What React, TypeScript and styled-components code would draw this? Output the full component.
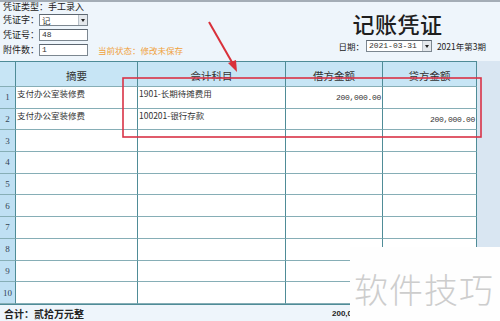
import React from "react";
import styled, { createGlobalStyle } from "styled-components";

const GlobalStyle = createGlobalStyle`
  html, body {
    margin: 0;
    padding: 0;
    background: #eef5fb;
  }
  body {
    font-family: "Noto Sans CJK SC", "Noto Sans", sans-serif;
    color: #222;
  }
`;

const Page = styled.div`
  position: relative;
  width: 500px;
  height: 321px;
  overflow: hidden;
  background: #eef5fb;
`;

const TopBar = styled.div`
  height: 2px;
  background: #a4adb6;
`;

const HeaderArea = styled.div`
  height: 59px;
  display: flex;
  justify-content: space-between;
  box-sizing: border-box;
`;

const LeftInfo = styled.div`
  display: flex;
  flex-direction: column;
  padding-left: 3px;
  gap: 3px;
`;

const TypeLine = styled.div`
  font-size: 9px;
  line-height: 9px;
  height: 9px;
`;

const FieldRow = styled.div`
  display: flex;
  align-items: center;
  height: 12px;
  font-size: 9px;
`;

const Label = styled.span`
  width: 36px;
  font-size: 9px;
  line-height: 12px;
`;

const Box = styled.div<{ $w: number }>`
  width: ${(p) => p.$w}px;
  height: 12px;
  box-sizing: border-box;
  border: 1px solid #7c8790;
  border-top-color: #5c6670;
  background: #fff;
  font-family: "Liberation Mono", monospace;
  font-size: 8px;
  line-height: 10px;
  padding-left: 2px;
  display: flex;
  justify-content: space-between;
  align-items: stretch;
  color: #333;
`;

const BoxText = styled.span`
  font-family: "Noto Sans CJK SC", "Liberation Sans", sans-serif;
  font-size: 8.5px;
  line-height: 10px;
`;

const DropBtn = styled.span`
  width: 8px;
  background: #e4e8ec;
  border-left: 1px solid #b8c0c8;
  display: flex;
  align-items: center;
  justify-content: center;
  &::after {
    content: "";
    border-left: 2.5px solid transparent;
    border-right: 2.5px solid transparent;
    border-top: 3px solid #222;
  }
`;

const Status = styled.span`
  margin-left: 10px;
  color: #f0a23c;
  font-size: 8.5px;
`;

const RightInfo = styled.div`
  display: flex;
  flex-direction: column;
  align-items: flex-start;
  padding-right: 14px;
`;

const Title = styled.div`
  margin-left: 14px;
  margin-top: 7px;
  font-size: 22px;
  line-height: 28px;
  font-weight: 500;
  letter-spacing: 0.5px;
  color: #1e1e1e;
`;

const DateRow = styled.div`
  display: flex;
  align-items: center;
  gap: 2px;
  margin-top: 3px;
  font-size: 8.5px;
`;

const Period = styled.span`
  margin-left: 3px;
  font-size: 8.5px;
`;

const Grid = styled.div`
  display: grid;
  grid-template-columns: 16px 122px 148px 97px 94px 23px;
  grid-template-rows: 25px repeat(10, 21.7px);
  border-top: 1px solid #4f8c97;
  background: #fff;
`;

const Cell = styled.div<{ $kind?: "head" | "num" | "text" | "amount" }>`
  box-sizing: border-box;
  border-right: 1px solid #4f8c97;
  border-bottom: 1px solid #86aeb6;
  background: ${(p) =>
    p.$kind === "head" ? "#c7e5f5" : p.$kind === "num" ? "#bfe0f3" : "#fff"};
  font-size: ${(p) => (p.$kind === "head" ? "10.5px" : "8.5px")};
  display: flex;
  overflow: hidden;
  white-space: nowrap;
  ${(p) =>
    p.$kind === "head"
      ? "align-items: center; justify-content: center; padding-top: 2px; color: #333;"
      : p.$kind === "num"
      ? "align-items: center; justify-content: center; font-family: 'Liberation Serif', serif; font-size: 9px; color: #345;"
      : p.$kind === "amount"
      ? "align-items: center; justify-content: flex-end; padding-right: 1px; font-family: 'Liberation Mono', monospace; font-size: 8px; letter-spacing: -0.3px; color: #333;"
      : "align-items: flex-start; padding: 2px 0 0 1px; color: #333; line-height: 9px;"}
`;

const Filler = styled.div`
  grid-column: 6;
  grid-row: 1 / -1;
  background: #d9e6f2;
  margin-top: -1px;
`;

const TotalRow = styled.div`
  width: 350px;
  height: 18px;
  display: flex;
  align-items: center;
  font-size: 10px;
  font-weight: 700;
  padding-left: 4px;
  border-top: 1px solid #4f8c97;
  box-sizing: border-box;
  overflow: hidden;
  white-space: nowrap;
`;

const TotalLabel = styled.span`
  width: 36px;
`;

const TotalAmount = styled.span`
  margin-left: 248px;
  font-family: "Liberation Sans", sans-serif;
  font-size: 8px;
`;

const Overlay = styled.svg`
  position: absolute;
  left: 0;
  top: 0;
  pointer-events: none;
`;

const Watermark = styled.div`
  position: absolute;
  left: 350px;
  top: 247px;
  width: 150px;
  height: 74px;
  background: #fefefe;
  display: flex;
  align-items: center;
  padding-left: 4px;
  box-sizing: border-box;
  font-size: 34px;
  font-weight: 300;
  letter-spacing: 1px;
  color: #cdcdcd;
  padding-top: 8px;
`;

type Row = { summary: string; account: string; debit: string; credit: string };

const rows: Row[] = [
  { summary: "支付办公室装修费", account: "1901-长期待摊费用", debit: "200,000.00", credit: "" },
  { summary: "支付办公室装修费", account: "100201-银行存款", debit: "", credit: "200,000.00" },
  ...Array.from({ length: 8 }, () => ({ summary: "", account: "", debit: "", credit: "" })),
];

const App = () => {
  return (
    <Page>
      <GlobalStyle />
      <TopBar />
      <HeaderArea>
        <LeftInfo>
          <TypeLine>凭证类型：手工录入</TypeLine>
          <FieldRow>
            <Label>凭证字：</Label>
            <Box $w={49}>
              <BoxText>记</BoxText>
              <DropBtn />
            </Box>
          </FieldRow>
          <FieldRow>
            <Label>凭证号：</Label>
            <Box $w={49}>48</Box>
          </FieldRow>
          <FieldRow>
            <Label>附件数：</Label>
            <Box $w={49}>1</Box>
            <Status>当前状态：修改未保存</Status>
          </FieldRow>
        </LeftInfo>
        <RightInfo>
          <Title>记账凭证</Title>
          <DateRow>
            <span>日期：</span>
            <Box $w={66}>
              2021-03-31
              <DropBtn />
            </Box>
            <Period>2021年第3期</Period>
          </DateRow>
        </RightInfo>
      </HeaderArea>
      <Grid>
        <Cell $kind="head" />
        <Cell $kind="head">摘要</Cell>
        <Cell $kind="head">会计科目</Cell>
        <Cell $kind="head">借方金额</Cell>
        <Cell $kind="head">贷方金额</Cell>
        <Filler />
        {rows.map((r, i) => (
          <React.Fragment key={i}>
            <Cell $kind="num">{i + 1}</Cell>
            <Cell $kind="text">{r.summary}</Cell>
            <Cell $kind="text">{r.account}</Cell>
            <Cell $kind="amount">{r.debit}</Cell>
            <Cell $kind="amount">{r.credit}</Cell>
          </React.Fragment>
        ))}
      </Grid>
      <TotalRow>
        <TotalLabel>合计：</TotalLabel>
        <span>贰拾万元整</span>
        <TotalAmount>200,000.00</TotalAmount>
      </TotalRow>
      <Overlay width="500" height="321" viewBox="0 0 500 321">
        <rect x="123" y="78" width="358" height="59" fill="none" stroke="#d93346" strokeWidth="1.6" />
        <line x1="209" y1="22" x2="233" y2="64" stroke="#d9303a" strokeWidth="2" />
        <polygon points="237,72 228,63 236,60" fill="#d9303a" />
      </Overlay>
      <Watermark>软件技巧</Watermark>
    </Page>
  );
};

export default App;
